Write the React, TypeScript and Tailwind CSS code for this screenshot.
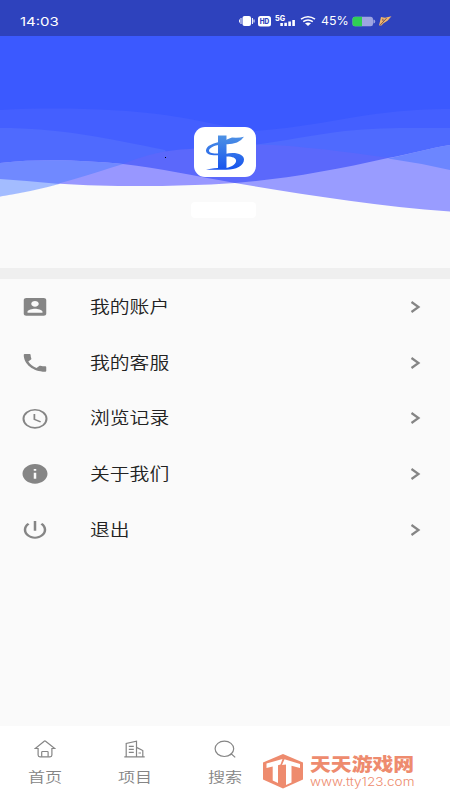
import type { ReactNode } from "react";

const MENU = [
    { label: "我的账户", icon: "account" },
    { label: "我的客服", icon: "phone" },
    { label: "浏览记录", icon: "clock" },
    { label: "关于我们", icon: "info" },
    { label: "退出", icon: "power" },
];

const TABS = [
    { label: "首页", icon: "home" },
    { label: "项目", icon: "building" },
    { label: "搜索", icon: "search" },
];

const MENU_ICONS: Record<string, ReactNode> = {
    account: (
        <path
            fill="currentColor"
            d="M3 5v14c0 1.1.89 2 2 2h14c1.1 0 2-.9 2-2V5c0-1.1-.9-2-2-2H5c-1.11 0-2 .9-2 2zm12 4c0 1.66-1.34 3-3 3s-3-1.34-3-3 1.34-3 3-3 3 1.34 3 3zm-9 8c0-2 4-3.1 6-3.1s6 1.1 6 3.1v1H6v-1z"
        />
    ),
    phone: (
        <path
            fill="currentColor"
            d="M6.62 10.79c1.44 2.83 3.76 5.14 6.59 6.59l2.2-2.2c.27-.27.67-.36 1.02-.24 1.12.37 2.33.57 3.57.57.55 0 1 .45 1 1V20c0 .55-.45 1-1 1C10.61 21 3 13.39 3 4c0-.55.45-1 1-1h3.5c.55 0 1 .45 1 1 0 1.25.2 2.45.57 3.57.11.35.03.74-.25 1.02l-2.2 2.2z"
        />
    ),
    clock: (
        <g fill="none" stroke="currentColor" strokeWidth="1.6">
            <circle cx="12" cy="12" r="9.2" />
            <path d="M11.5 7v5.6l5 2.6" strokeWidth="1.4" />
        </g>
    ),
    info: (
        <path
            fill="currentColor"
            d="M12 2C6.48 2 2 6.48 2 12s4.48 10 10 10 10-4.48 10-10S17.52 2 12 2zm1 15h-2v-6h2v6zm0-8h-2V7h2v2z"
        />
    ),
    power: (
        <path
            fill="currentColor"
            d="M13 3h-2v10h2V3zm4.83 2.17l-1.42 1.42C17.99 7.86 19 9.81 19 12c0 3.87-3.13 7-7 7s-7-3.13-7-7c0-2.19 1.01-4.14 2.58-5.42L6.17 5.17C4.23 6.82 3 9.26 3 12c0 4.97 4.03 9 9 9s9-4.03 9-9c0-2.74-1.23-5.18-3.17-6.83z"
        />
    ),
};

const TAB_ICONS: Record<string, ReactNode> = {
    home: (
        <>
            <path d="M4.1 8.5H1.2L10.2 1.2Q10.9 .7 11.6 1.2L20.8 8.5H17.9V15Q17.9 16.8 16 16.8H6Q4.1 16.8 4.1 15Z" />
            <path d="M7.7 16.8V12.3Q7.7 11.5 8.5 11.5H13.3Q14.1 11.5 14.1 12.3V16.8" />
        </>
    ),
    building: (
        <>
            <path d="M.3 16.8H20.7M2.2 16.8V3.5L12.5 1.2V16.8M12.5 7.4L18.8 10.5V16.8" />
            <path d="M4.8 6.3H9.8M4.8 9.3H9.8M4.8 12.3H9.8M14.5 13H17" />
        </>
    ),
    search: (
        <>
            <ellipse cx="10.4" cy="8.8" rx="9.3" ry="7.7" />
            <path d="M15.8 15L17.2 13.8L21.2 17.4" />
        </>
    ),
};

function StatusBar() {
    return (
        <div className="flex h-9 items-center bg-[#2e42bd] pt-1.5 pl-5 text-white">
            <span className="w-[219px] pt-0.5 text-[12px] leading-none">
                <span className="inline-block origin-left scale-x-[1.25]">14:03</span>
            </span>
            <svg className="h-4 w-[82px]" viewBox="239 13 82 16" fill="#fff">
                <rect x="242.5" y="16" width="8.5" height="10" rx="2" />
                <path d="M241 18v6M239.4 19.5v3M252.4 18v6M254 19.5v3" stroke="#fff" strokeWidth="1" />
                <rect x="258" y="16" width="13" height="10.5" rx="2.5" />
                <text x="259.7" y="24.2" fontSize="7.5" fontWeight="800" fill="#2e42bd" textLength="9.6" lengthAdjust="spacingAndGlyphs">HD</text>
                <text x="275" y="20.5" fontSize="7" fontWeight="800" textLength="10" lengthAdjust="spacingAndGlyphs">5G</text>
                <path d="M280.3 23h2.6v3h-2.6zM284.3 22.7h2.6V26h-2.6zM288.3 21.5h2.6V26h-2.6zM292.3 20h2.6v6h-2.6z" />
                <path d="M301 19.2q7-5 14 0M303.2 21.6q4.8-3.3 9.6 0" fill="none" stroke="#fff" strokeWidth="1.5" />
                <path d="M305 23.3q3-1.8 6 0l-3 2.7z" />
            </svg>
            <span className="w-[31px] pt-px text-[11.5px] leading-none">
                <span className="inline-block origin-left scale-x-[1.08]">45%</span>
            </span>
            <svg className="h-4 w-10" viewBox="352 13 40 16">
                <rect x="352.5" y="16.7" width="20.5" height="9.5" rx="2.5" fill="#9da4e2" />
                <path d="M373.4 19.5q1.8 0 1.8 2t-1.8 2z" fill="#9da4e2" />
                <path d="M355 16.7h7v9.5h-7q-2.5 0-2.5-2.5v-4.5q0-2.5 2.5-2.5z" fill="#2fce55" />
                <path d="M379 25.5l2-8.5 4 .7 6.500-1.500-4 4.500-4 2.600-2 2.200z" fill="#efb56c" />
                <path d="M380 25.3l6.6-7.200M383 21l-.2-2.200" stroke="#5b4050" strokeWidth=".8" fill="none" />
            </svg>
        </div>
    );
}

function Waves() {
    return (
        <svg className="block h-[180px] w-full" viewBox="0 0 450 180">
            <rect width="450" height="180" fill="#3b59ff" />
            <path fill="#445fff" d="M0 74C60 71 120 73 165 79C200 84 225 91 255 95C300 92 340 83 375 78C405 74 430 73 450 73V180H0Z" />
            <path fill="#4f6afe" d="M0 92C60 92 105 102 165 114L200 180H0Z" />
            <path fill="#4f6afe" d="M245 110C280 106 310 99 345 95C380 91 420 92 450 92V180H245Z" />
            <path fill="#5b68fb" d="M0 160.5C45 154 90 138 123 128C145 119 165 114 190 113C225 108 260 108 290 110C330 114 400 121 450 134V180H0Z" />
            <path fill="#9897ff" d="M0 127C45 122 90 125 123 128C160 132 195 140 235 147V180H0Z" />
            <path fill="#7089ff" d="M0 127C45 122 90 125 123 128C90 138 45 154 0 160.5Z" />
            <path fill="#a3bcff" d="M0 143Q30 145 60 148Q30 157 0 160.5Z" />
            <path fill="#999cff" d="M235 147C285 143 335 134 388 122C410 118 430 112 450 109V180H235Z" />
            <path fill="#6c86ff" d="M388 122.5C410 118 430 112 450 109V134Q420 127 388 122.5Z" />
            <path fill="#fafafa" d="M0 160.5Q35 155 60 147.8C110 151 175 151 235 147C300 158 375 170 450 175.5V180H0Z" />
        </svg>
    );
}

function AppLogo() {
    return (
        <div className="flex h-[50px] w-[62px] items-center justify-center rounded-[11px] bg-white">
            <svg className="h-[50px] w-[62px]" viewBox="0 0 62 50">
                <defs>
                    <linearGradient id="logo" gradientUnits="userSpaceOnUse" x1="0" y1="8" x2="0" y2="43">
                        <stop offset="0" stopColor="#4f93e4" />
                        <stop offset="1" stopColor="#1653ee" />
                    </linearGradient>
                </defs>
                <g fill="url(#logo)">
                    <path d="M24 8.5H32.5V41H24Z" />
                    <path d="M50 9.8Q45 11 38 10.5Q34 11.5 30 14Q12 17 12 23.5C12 28 19 29 27 28V26.2C19 27 15 26 15 23.5C15.5 20 22 18 30 17Q36 18 43 15.5Q48 13 50 9.8Z" />
                    <path d="M31 27C41 24.5 50 27 50 32.5C50 39 42 42.8 32 42.8L12 42.7Q16 41.5 24 41H32C38 40 43 36.5 42 33C41 30 37 29.5 31 29.5Z" />
                </g>
            </svg>
        </div>
    );
}

function Watermark() {
    return (
        <div className="absolute top-[753px] left-[262px] flex text-[#ee8b6e]">
            <svg className="h-9 w-[42px]" viewBox="0 0 42 36">
                <path d="M21 1L41 9.5V26.5L21 35.5L1 26.5V9.5Z" fill="currentColor" />
                <path d="M4.5 10.5L20.5 6L18.5 11.500L16 12.200V30L10.700 27.500V13.500L4.500 15Z" fill="#fff" />
                <path d="M22.5 6.3L38 11V15L29.500 12.800V29.500L24 32V11.500L20 12Z" fill="#fff" />
            </svg>
            <div className="ml-1.5 w-[106px]">
                <p className="origin-left scale-x-[1.14] text-[18.3px] leading-[23px] font-black whitespace-nowrap">天天游戏网</p>
                <p className="-mt-px origin-left scale-x-[1.17] text-[11.6px] leading-[14px] font-light whitespace-nowrap">www.tty123.com</p>
            </div>
        </div>
    );
}

export default function App() {
    return (
        <main className="relative flex h-[800px] w-[450px] flex-col overflow-hidden bg-[#fafafa] font-[Inter,'Noto_Sans_CJK_SC',sans-serif]">
            <StatusBar />

            <header className="grid h-[232px]">
                <div className="col-start-1 row-start-1">
                    <Waves />
                </div>
                <div className="z-10 col-start-1 row-start-1 flex flex-col items-center pt-[91px]">
                    <AppLogo />
                    <div className="mt-[25px] mr-1 h-4 w-[65px] rounded bg-white" />
                </div>
                <span className="absolute top-[157px] left-[165px] size-px bg-black" />
            </header>

            <div className="h-[11px] bg-[#efefef]" />

            <nav className="flex-1">
                {MENU.map((item) => (
                    <a key={item.label} className="flex h-[55.8px] items-center pr-[29px] pl-5 text-[#858585]">
                        <svg className="h-[23.6px] w-[30px]" viewBox="0 0 24 24" preserveAspectRatio="none">
                            {MENU_ICONS[item.icon]}
                        </svg>
                        <span className="ml-10 flex-1 text-[#222]">
                            <span className="inline-block origin-left scale-x-[1.2] text-[16.5px] leading-6 font-[350]">{item.label}</span>
                        </span>
                        <svg className="h-3 w-[11px]" viewBox="0 0 11 12" fill="none" stroke="currentColor" strokeWidth="2.2">
                            <path d="M1.5 1L8.5 6L1.5 11" />
                        </svg>
                    </a>
                ))}
            </nav>

            <footer className="flex h-[74px] bg-white text-[#858585]">
                {TABS.map((tab) => (
                    <div key={tab.label} className="flex w-[90px] flex-col items-center pt-[14px]">
                        <svg className="h-[18px] w-[22px]" viewBox="0 0 22 18" fill="none" stroke="currentColor" strokeWidth="1.2">
                            {TAB_ICONS[tab.icon]}
                        </svg>
                        <span className="mt-[9px] scale-x-[1.22] text-[14px] leading-5 font-[350]">{tab.label}</span>
                    </div>
                ))}
            </footer>

            <Watermark />
        </main>
    );
}
